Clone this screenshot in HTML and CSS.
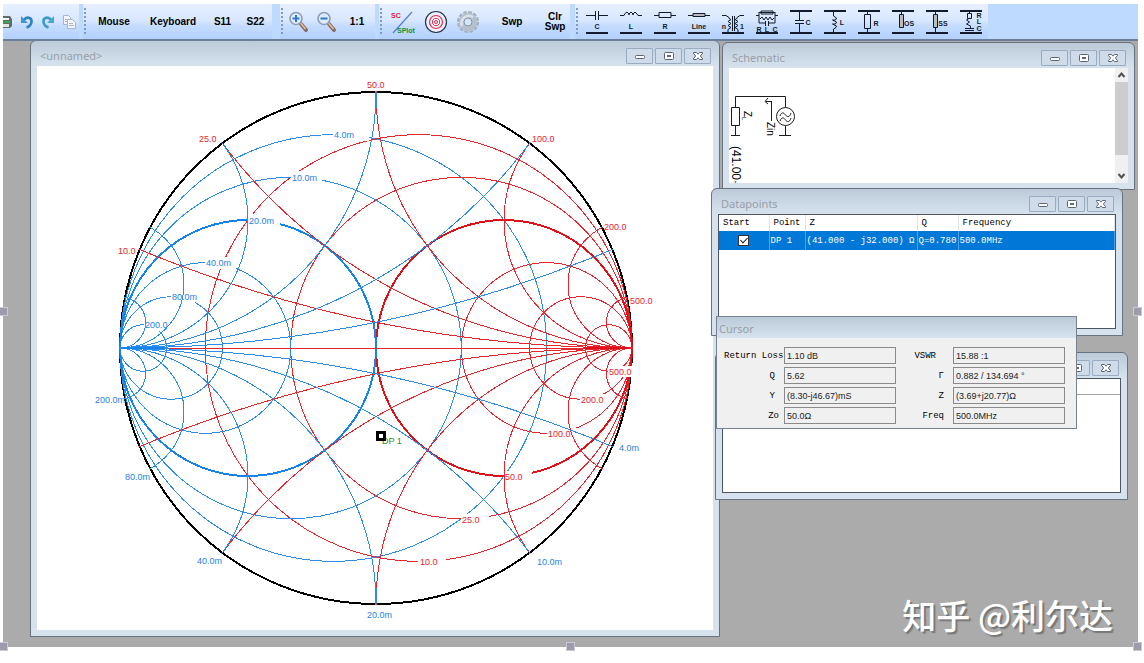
FILE: index.html
```
<!DOCTYPE html>
<html lang="en">
<head>
<meta charset="utf-8">
<title>Smith chart</title>
<link rel="stylesheet" href="styles.css">
</head>
<body>
<svg class="defs" width="0" height="0" aria-hidden="true">
  <symbol id="i-min" viewBox="0 0 12 10"><rect x="1.5" y="4.5" width="9" height="3" rx="1" fill="#fff" stroke="#5b6675"/></symbol>
  <symbol id="i-max" viewBox="0 0 12 10"><rect x="1.500" y="1.500" width="9" height="7" rx="1" fill="#fff" stroke="#5b6675"/><rect x="4.500" y="4.500" width="3" height="1" fill="none" stroke="#5b6675"/></symbol>
  <symbol id="i-close" viewBox="0 0 12 10"><path d="M1.500 1.500h3L6 3.200 7.500 1.500h3v1L8.300 5l2.200 2.500v1h-3L6 6.800 4.500 8.500h-3v-1L3.700 5 1.500 2.500z" fill="#fff" stroke="#5b6675"/></symbol>
</svg>

<div class="app">
  <header class="toolbar">
    <div class="strip files">
      <button class="tool w-print" aria-label="Print"><svg width="10" height="16" viewBox="0 0 10 16"><path d="M0 2h7l2 3v7l-2 2H0z" fill="#5f6d68"/><path d="M0 4h6v2H0z" fill="#f4f7f5"/><path d="M0 7h7v2H0z" fill="#3fa34d"/><path d="M0 10h6v3H0z" fill="#dfe6e4"/></svg></button>
      <button class="tool w-file" aria-label="Undo"><svg width="14" height="16" viewBox="0 0 14 16"><path d="M4 5.500C8 2 12 4 11.500 8c-.3 2.500-2 4.500-5 5.500" fill="none" stroke="#2d83bd" stroke-width="2.600"/><path d="M1 2v7h7z" fill="#3f97cf"/></svg></button>
      <button class="tool w-file" aria-label="Redo"><svg width="14" height="16" viewBox="0 0 14 16"><path d="M10 5.500C6 2 2 4 2.500 8c.3 2.500 2 4.500 5 5.500" fill="none" stroke="#3a9bc9" stroke-width="2.600"/><path d="M13 2v7H6z" fill="#49a7d4"/></svg></button>
      <button class="tool w-file" aria-label="Copy"><svg width="14" height="16" viewBox="0 0 14 16" fill="#f1f4fa" stroke="#a9b4c6"><path d="M1.500 1.500h5l2 2v7h-7zM3 5.500h3M3 7.500h3"/><path d="M5.500 5.500h5l3 3v6h-8zM7 9.500h4M7 11.500h5"/></svg></button>
    </div>
    <div class="strip modes">
      <span class="grip"></span>
      <button class="tool w-mouse">Mouse</button>
      <button class="tool w-keyboard">Keyboard</button>
      <button class="tool w-s">S11</button>
      <button class="tool w-s">S22</button>
    </div>
    <div class="strip zooms">
      <span class="grip"></span>
      <button class="tool w-zoom" aria-label="Zoom in"><svg width="22" height="24" viewBox="0 0 22 24"><path d="M13 14l5 6" stroke="#8a6c5c" stroke-width="4" stroke-linecap="round"/><path d="M12.500 13l5 6" stroke="#d9c3ab" stroke-width="1.500"/><circle cx="8" cy="8.500" r="6" fill="#dcecfb" stroke="#8d9cb4" stroke-width="1.600"/><path d="M4.500 8.500h7M8 5v7" stroke="#3078c8" stroke-width="2"/></svg></button>
      <button class="tool w-zoom" aria-label="Zoom out"><svg width="22" height="24" viewBox="0 0 22 24"><path d="M13 14l5 6" stroke="#8a6c5c" stroke-width="4" stroke-linecap="round"/><path d="M12.500 13l5 6" stroke="#d9c3ab" stroke-width="1.500"/><circle cx="8" cy="8.500" r="6" fill="#dcecfb" stroke="#8d9cb4" stroke-width="1.600"/><path d="M4.500 8.500h7" stroke="#3078c8" stroke-width="2"/></svg></button>
      <button class="tool w-ratio">1:1</button>
    </div>
    <div class="strip plots">
      <span class="grip"></span>
      <button class="tool w-plot" aria-label="Smith chart or S plot"><svg width="26" height="26" viewBox="0 0 26 26"><path d="M4 24L23 3" stroke="#5b78d0" stroke-width="1.200"/><text x="2" y="9" class="tiny red">SC</text><text x="8" y="24" class="tiny green">SPlot</text></svg></button>
      <button class="tool w-icon" aria-label="Target"><svg width="24" height="24" viewBox="0 0 24 24" fill="none"><circle cx="12" cy="12" r="10.500" fill="#eef2fc" stroke="#26324a" stroke-width="1.200"/><circle cx="12" cy="12" r="6.500" stroke="#e8304c" stroke-width="1.200"/><path d="M10.500 8.500h3l2 2v3l-2 2h-3l-2-2v-3z" stroke="#e8304c"/><circle cx="12" cy="12" r="1.500" stroke="#e8304c"/></svg></button>
      <button class="tool w-icon" aria-label="Settings"><svg width="24" height="26" viewBox="0 0 24 26" fill="none"><circle cx="12" cy="13" r="9.800" stroke="#a3b1bf" stroke-width="2.600" stroke-dasharray="3.600 1.530"/><circle cx="12" cy="13" r="6.800" stroke="#b4c0cb" stroke-width="5"/><path d="M6 17a7.500 7.500 0 0 1 11-9" stroke="#dbe3ea" stroke-width="2.500"/><circle cx="12" cy="13" r="4" fill="#d6e4f8" stroke="#8496a8"/></svg></button>
      <button class="tool w-swp">Swp</button>
      <button class="tool w-clr">Clr<br>Swp</button>
    </div>
    <div class="strip parts">
      <span class="grip"></span>
      <button class="tool part" aria-label="Series capacitor"><svg viewBox="0 0 24 28"><path class="rail" d="M1 25h22"/><path d="M1 7.500h9M14 7.500h9M10.500 3v9M13.500 3v9"/><text x="12" y="21">C</text></svg></button>
      <button class="tool part" aria-label="Series inductor"><svg viewBox="0 0 24 28"><path class="rail" d="M1 25h22"/><path d="M1 7.500h4l1-2 2-1.500 2 2v1-1l2-2 2 2v1-1l2-2 2 2 1 1.500h4"/><text x="12" y="21">L</text></svg></button>
      <button class="tool part" aria-label="Series resistor"><svg viewBox="0 0 24 28"><path class="rail" d="M1 25h22"/><path d="M1 7.500h5M18 7.500h5M6 4.500h12v5H6z"/><text x="12" y="21">R</text></svg></button>
      <button class="tool part" aria-label="Series line"><svg viewBox="0 0 24 28"><path class="rail" d="M1 25h22"/><path d="M1 7.500h5M18 7.500h5"/><path class="solid" d="M6 5.500h12v3H6z"/><text x="12" y="21">Line</text></svg></button>
      <button class="tool part" aria-label="Transformer"><svg viewBox="0 0 24 28"><path class="rail" d="M1 25h22"/><path d="M1 7.500h4l3 2v1l2 1-3 2 3 2-3 2 3 2-3 2v3M23 7.500h-4l-3 2v1l-2 1 3 2-3 2 3 2-3 2 3 2v3M11.500 8v15M13.500 8v15"/><text x="3" y="21">n</text><text x="21" y="21">1</text></svg></button>
      <button class="tool part" aria-label="Parallel RLC in series"><svg viewBox="0 0 24 28"><path class="rail" d="M1 25h22"/><path d="M1 7.500h3M20 7.500h3M4 4v11h6M20 4v11h-6M4 4.500h16M6 3h12v3H6zM5 11l2-2 2 3 2-3 2 3 2-3 2 3 2-2M10.500 13v5M13.500 13v5"/><text x="4" y="24">R</text><text x="12" y="24">L</text><text x="20" y="24">C</text></svg></button>
      <button class="tool part" aria-label="Shunt capacitor"><svg viewBox="0 0 24 28"><path class="rail" d="M1 25h22M1 3h22"/><path d="M10.500 3v10M10.500 16v9M6 12.500h9M6 15.500h9"/><text x="19" y="17">C</text></svg></button>
      <button class="tool part" aria-label="Shunt inductor"><svg viewBox="0 0 24 28"><path class="rail" d="M1 25h22M1 3h22"/><path d="M10.500 3v5l3 2-1 2-3 0 4 2-1 2-3 0 4 2-1 2-2 1v4"/><text x="19" y="17">L</text></svg></button>
      <button class="tool part" aria-label="Shunt resistor"><svg viewBox="0 0 24 28"><path class="rail" d="M1 25h22M1 3h22"/><path d="M10.500 3v3M10.500 21v4M7.500 6.500h6v14h-6z"/><text x="19" y="18">R</text></svg></button>
      <button class="tool part" aria-label="Open stub"><svg viewBox="0 0 24 28"><path class="rail" d="M1 25h22M1 3h22"/><path d="M10.500 3v3"/><path class="solid" d="M8.500 6.500h4v13h-4z"/><text x="18" y="18">OS</text></svg></button>
      <button class="tool part" aria-label="Shorted stub"><svg viewBox="0 0 24 28"><path class="rail" d="M1 25h22M1 3h22"/><path d="M10.500 3v3M10.500 20v5"/><path class="solid" d="M8.500 6.500h4v13h-4z"/><text x="18" y="18">SS</text></svg></button>
      <button class="tool part" aria-label="Series RLC in shunt"><svg viewBox="0 0 24 28"><path class="rail" d="M1 25h22M1 3h22"/><path d="M10.500 3v2M8.500 5.500h4v5h-4zM10.500 10l-3 2 3 2-3 2 4 2v3M6 20.500h9M6 22.500h9"/><text x="20" y="10">R</text><text x="20" y="16">L</text><text x="20" y="23">C</text></svg></button>
    </div>
  </header>

  <main class="desktop">
    <section class="window win-chart">
      <div class="titlebar"><h2>&lt;unnamed&gt;</h2>
        <button aria-label="Minimize"><svg><use href="#i-min"/></svg></button><button aria-label="Maximize"><svg><use href="#i-max"/></svg></button><button aria-label="Close"><svg><use href="#i-close"/></svg></button></div>
      <div class="client">
        <svg class="chart" viewBox="37 66 676 564" role="img" aria-label="Smith chart">
          <clipPath id="disc"><circle cx="376" cy="348" r="257"/></clipPath>
          <circle class="rim" cx="376" cy="348" r="256"/>
          <g clip-path="url(#disc)">
            <g class="z">
              <circle cx="418.667" cy="348" r="213.333"/><circle cx="461.333" cy="348" r="170.667"/>
              <circle cx="546.667" cy="348" r="85.333"/><circle cx="580.800" cy="348" r="51.200"/><circle cx="608.727" cy="348" r="23.273"/>
              <circle class="unit" cx="504" cy="348" r="128"/>
            </g>
            <g class="y">
              <circle cx="333.333" cy="348" r="213.333"/><circle cx="290.667" cy="348" r="170.667"/>
              <circle cx="205.333" cy="348" r="85.333"/><circle cx="171.200" cy="348" r="51.200"/><circle cx="143.273" cy="348" r="23.273"/>
              <circle class="unit" cx="248" cy="348" r="128"/>
            </g>
          </g>
          <g class="gap">
            <rect x="333" y="128" width="36" height="13"/><rect x="291" y="171" width="31" height="13"/>
            <rect x="248" y="214" width="32" height="13"/><rect x="205" y="257" width="31" height="12"/>
            <rect x="171" y="291" width="24" height="12"/><rect x="144" y="319" width="24" height="12"/>
            <rect x="608" y="366" width="25" height="11"/><rect x="580" y="394" width="27" height="11"/>
            <rect x="547" y="428" width="31" height="11"/><rect x="504" y="471" width="28" height="11"/>
            <rect x="461" y="514" width="28" height="11"/><rect x="418" y="556" width="28" height="11"/>
          </g>
          <g clip-path="url(#disc)">
            <g class="z">
              <circle cx="632" cy="-932" r="1280"/><circle cx="632" cy="1628" r="1280"/>
              <circle cx="632" cy="-164" r="512"/><circle cx="632" cy="860" r="512"/>
              <circle cx="632" cy="92" r="256"/><circle cx="632" cy="604" r="256"/>
              <circle cx="632" cy="220" r="128"/><circle cx="632" cy="476" r="128"/>
              <circle cx="632" cy="284" r="64"/><circle cx="632" cy="412" r="64"/>
              <circle cx="632" cy="322.400" r="25.600"/><circle cx="632" cy="373.600" r="25.600"/>
              <path d="M120 348h512"/><path class="unit" d="M584 348h46"/>
            </g>
            <g class="y">
              <circle cx="120" cy="-932" r="1280"/><circle cx="120" cy="1628" r="1280"/>
              <circle cx="120" cy="-164" r="512"/><circle cx="120" cy="860" r="512"/>
              <circle cx="120" cy="92" r="256"/><circle cx="120" cy="604" r="256"/>
              <circle cx="120" cy="220" r="128"/><circle cx="120" cy="476" r="128"/>
              <circle cx="120" cy="284" r="64"/><circle cx="120" cy="412" r="64"/>
              <circle cx="120" cy="322.400" r="25.600"/><circle cx="120" cy="373.600" r="25.600"/>
              <path class="unit" d="M122 348h42"/><path d="M376 92v16M376 588v16"/>
            </g>
          </g>
          <g class="red">
            <text x="367" y="88">50.0</text><text x="199" y="142">25.0</text><text x="118" y="254">10.0</text>
            <text x="532" y="142">100.0</text><text x="604" y="230">200.0</text><text x="630" y="304">500.0</text>
            <text x="609" y="375">500.0</text><text x="581" y="403">200.0</text><text x="548" y="437">100.0</text>
            <text x="505" y="480">50.0</text><text x="462" y="523">25.0</text><text x="420" y="565">10.0</text>
          </g>
          <g class="blue">
            <text x="334" y="138">4.0m</text><text x="292" y="181">10.0m</text><text x="249" y="224">20.0m</text>
            <text x="206" y="266">40.0m</text><text x="172" y="300">80.0m</text><text x="145" y="328">200.0</text>
            <text x="95" y="403">200.0m</text><text x="125" y="480">80.0m</text><text x="197" y="564">40.0m</text>
            <text x="367" y="618">20.0m</text><text x="537" y="565">10.0m</text><text x="619" y="451">4.0m</text>
          </g>
          <text class="green" x="382" y="444">DP 1</text>
          <rect class="marker" x="377.500" y="432.500" width="7" height="7"/>
        </svg>
      </div>
    </section>

    <section class="window win-schematic">
      <div class="titlebar"><h2>Schematic</h2>
        <button aria-label="Minimize"><svg><use href="#i-min"/></svg></button><button aria-label="Maximize"><svg><use href="#i-max"/></svg></button><button aria-label="Close"><svg><use href="#i-close"/></svg></button></div>
      <div class="client scrolled">
        <svg class="circuit" viewBox="729 68 386 115" role="img" aria-label="Source driving the load impedance">
          <path d="M735.500 107.500v-11h50v11M731.500 107.500h8v18h-8zM735.500 126v9M731 135.500h9M785.500 126v9M779 135.500h12M771.500 121v-20M772 101.500h-6M768 98l-3 3.500 3 2.500"/>
          <circle cx="785.500" cy="116.500" r="9"/>
          <path d="M780 116c2-5 4-3 5.500-1s4 3 5.500-2M780 121c2-5 4-3 5.500-1s4 3 5.500-2"/>
          <text transform="translate(744 111) rotate(90)" font-size="10">Z<tspan font-size="6" dy="2">L</tspan></text>
          <text transform="translate(767 122) rotate(90)" font-size="10">Zin</text>
          <text transform="translate(732 146) rotate(90)" font-size="12">(41.00·</text>
        </svg>
        <div class="scrollbar">
          <svg viewBox="0 0 13 14"><path d="M3.500 9L6.500 5.500 9.500 9"/></svg>
          <span class="thumb"></span>
          <svg viewBox="0 0 13 14"><path d="M3.500 5L6.500 8.500 9.500 5"/></svg>
        </div>
      </div>
    </section>

    <section class="window win-sweep">
      <div class="titlebar"><h2></h2>
        <button aria-label="Minimize"><svg><use href="#i-min"/></svg></button><button aria-label="Maximize"><svg><use href="#i-max"/></svg></button><button aria-label="Close"><svg><use href="#i-close"/></svg></button></div>
      <div class="client list"><div class="listhead"></div></div>
    </section>

    <section class="window win-points">
      <div class="titlebar"><h2>Datapoints</h2>
        <button aria-label="Minimize"><svg><use href="#i-min"/></svg></button><button aria-label="Maximize"><svg><use href="#i-max"/></svg></button><button aria-label="Close"><svg><use href="#i-close"/></svg></button></div>
      <div class="client list">
        <table>
          <colgroup><col class="c-start"><col class="c-point"><col class="c-z"><col class="c-q"><col></colgroup>
          <thead><tr><th>Start</th><th>Point</th><th>Z</th><th>Q</th><th>Frequency</th></tr></thead>
          <tbody><tr><td class="check"><input type="checkbox" checked aria-label="Start at DP 1"></td><td>DP 1</td><td>(41.000 - j32.000) Ω</td><td>Q=0.780</td><td>500.0MHz</td></tr></tbody>
        </table>
      </div>
    </section>

    <section class="dialog">
      <h2>Cursor</h2>
      <form>
        <label for="rl">Return Loss</label><input id="rl" readonly value="1.10 dB">
        <label for="vswr" class="far">VSWR</label><input id="vswr" readonly value="15.88 :1">
        <label for="q" class="mid">Q</label><input id="q" readonly value="5.62">
        <label for="gamma" class="mid">Γ</label><input id="gamma" readonly value="0.882 / 134.694 °">
        <label for="y" class="mid">Y</label><input id="y" readonly value="(8.30-j46.67)mS">
        <label for="z" class="mid">Z</label><input id="z" readonly value="(3.69+j20.77)Ω">
        <label for="zo" class="near">Zo</label><input id="zo" readonly value="50.0Ω">
        <label for="freq" class="mid">Freq</label><input id="freq" readonly value="500.0MHz">
      </form>
    </section>
    <p class="watermark">知乎 @利尔达</p>
  </main>
  <span class="handle h-w"></span><span class="handle h-e"></span><span class="handle h-sw"></span><span class="handle h-s"></span><span class="handle h-se"></span>
</div>
</body>
</html>
```
FILE: styles.css
```
* { box-sizing: border-box; }
body {
  margin: 0;
  min-height: 100vh;
  display: flex;
  flex-direction: column;
  padding: 4px 6px 16px 3px;
  background: #fff;
  color: #000;
  font-family: "Liberation Sans", Arial, sans-serif;
  font-size: 10px;
}
h2, p { margin: 0; }
button { margin: 0; padding: 0; border: 0; background: none; font: inherit; color: inherit; }
.defs { position: absolute; }
.app { position: relative; flex: 1; display: flex; flex-direction: column; background: #ababab; }

/* Toolbar */
.toolbar { display: flex; height: 37px; background: #bfdaff; border-bottom: 2px solid #6c7f98; overflow: hidden; }
.strip { display: flex; align-items: stretch; flex: none; background: linear-gradient(#e6f0ff, #d9e8ff 45%, #c3dbff 65%, #b3d1fd); }
.files { width: 76px; margin-right: 4px; }
.modes { margin-right: 8px; }
.zooms { width: 95px; margin-right: 4px; }
.plots { margin-right: 5px; }
.grip { width: 5px; margin: 3px 0; background: radial-gradient(circle at 2px 2px, #7b9bd0 1px, transparent 1px) 0 0 / 5px 4px; }
.tool { display: flex; align-items: center; justify-content: center; flex: none; font-weight: 700; line-height: 10px; text-align: center; }
.w-print { width: 13px; justify-content: flex-start; }
.w-file { width: 21px; }
.w-mouse { width: 52px; }
.w-keyboard { width: 66px; }
.w-s { width: 33px; }
.w-zoom { width: 28px; }
.w-ratio { width: 32px; }
.w-plot { width: 36px; }
.w-icon { width: 32px; }
.w-swp { width: 56px; }
.w-clr { width: 30px; }
.part { width: 34px; }
.part svg { width: 24px; height: 28px; }
.part path { fill: none; stroke: #111b2b; stroke-width: 1; }
.part .solid { fill: #bbb; }
.part .rail { stroke-width: 2; }
.part text { font-size: 7px; font-weight: 700; text-anchor: middle; fill: #111b2b; }
.tiny { font-size: 7px; font-weight: 700; }
.tiny.red { fill: #e0203a; }
.tiny.green { fill: #12942a; }

/* Child windows */
.desktop { position: relative; flex: 1; overflow: hidden; }
.window {
  position: absolute;
  padding: 0 6px 6px;
  border: 1px solid #69737f;
  border-radius: 6px 6px 0 0;
  background: linear-gradient(#bccad9, #d6e3ef 25px);
}
.titlebar { display: flex; align-items: center; gap: 2px; height: 25px; padding: 4px 2px 0 3px; }
h2 { flex: 1; font: 400 11px/14px "Noto Sans", sans-serif; color: #989fa8; }
.titlebar button { display: grid; place-items: center; width: 27px; height: 16px; border: 1px solid #98abc2; border-radius: 1px; background: #cfdbe8; }
.titlebar svg { width: 12px; height: 10px; }
.client { background: #fff; }
.list { height: 115px; border: 1px solid #4c5662; }
.win-chart { left: 27px; top: -1px; width: 690px; }
.win-schematic { left: 719px; top: 1px; width: 413px; }
.win-points { left: 708px; top: 147px; width: 412px; }
.win-sweep { left: 712px; top: 311px; width: 413px; }
.listhead { height: 16px; border-bottom: 1px solid #a0a0a0; }

/* Smith chart */
.chart { display: block; width: 100%; }
.chart circle, .chart path { fill: none; stroke-width: 1; shape-rendering: crispEdges; }
.chart .rim { stroke: #000; stroke-width: 2; }
.z { stroke: #e8242c; }
.y { stroke: #2c8cec; }
.chart .unit { stroke-width: 2; }
.z .unit { stroke: #e01018; }
.y .unit { stroke: #1484ec; }
.gap { fill: #fff; }
.chart text { font-size: 9px; }
.chart .red { fill: #e8242c; }
.chart .blue { fill: #1f82e4; }
.chart .green { fill: #2e8b20; }
.marker { fill: #fff; stroke: #000; stroke-width: 3; }

/* Schematic */
.scrolled { display: flex; }
.circuit { flex: 1; min-width: 0; }
.circuit path, .circuit circle { fill: none; stroke: #1c1c1c; }
.scrollbar { display: flex; flex-direction: column; flex: none; width: 13px; background: #f0f0f0; }
.scrollbar svg { width: 13px; height: 14px; }
.scrollbar path { fill: none; stroke: #505050; stroke-width: 2; }
.thumb { height: 73px; margin-bottom: auto; background: #cdcdcd; }

/* Datapoints */
table { width: 100%; table-layout: fixed; border-collapse: collapse; font: 9px/12px "Liberation Mono", monospace; }
.c-start { width: 50px; }
.c-point { width: 36px; }
.c-z { width: 112px; }
.c-q { width: 41px; }
th, td { padding: 0 1px; font-weight: 400; text-align: left; white-space: nowrap; }
th { height: 16px; padding-left: 4px; border-right: 1px solid #e4e4e4; }
td { height: 19px; border-right: 1px solid #4fa0e6; }
tbody { background: #0078d7; color: #fff; }
td.check { text-align: center; }
input[type="checkbox"] { width: 11px; height: 11px; margin: 0; vertical-align: middle; appearance: none; border: 1px solid #333; background: #fff; position: relative; }
input[type="checkbox"]::after { content: ""; position: absolute; left: 3px; top: 0; width: 3px; height: 6px; border: solid #222; border-width: 0 1px 1px 0; transform: rotate(45deg); }

/* Cursor read-out */
.dialog { position: absolute; left: 713px; top: 275px; width: 361px; border: 1px solid #77828e; background: #f0f0f0; }
.dialog h2 { padding: 5px 2px 2px; background: linear-gradient(#bccad9, #d6e3ef); }
form { display: grid; grid-template-columns: 59px 112px 55px 112px; column-gap: 1px; row-gap: 3px; align-items: center; padding: 9px 7px 4px; }
label { font: 9px/12px "Liberation Mono", monospace; text-align: right; white-space: nowrap; }
.near { padding-right: 4px; }
.mid { padding-right: 8px; }
.far { padding-right: 16px; }
form input { width: 100%; height: 17px; padding: 0 2px; border: 1px solid #8a8a8a; background: #f0f0f0; font: 9px "Liberation Sans", Arial, sans-serif; color: #222; }

.watermark { position: absolute; right: 25px; bottom: 8px; color: #fff; font: 500 34px/48px "Noto Sans CJK SC", sans-serif; text-shadow: 2px 2px 1px #777; }

/* Selection handles */
.handle { position: absolute; width: 9px; height: 9px; border: 1px solid #c9c9d4; background: #9c9cac; }
.h-w { left: -4px; top: 303px; }
.h-e { right: -4px; top: 303px; }
.h-sw { left: -4px; bottom: -4px; }
.h-s { left: 50%; bottom: -4px; margin-left: -5px; }
.h-se { right: -4px; bottom: -4px; }
```
